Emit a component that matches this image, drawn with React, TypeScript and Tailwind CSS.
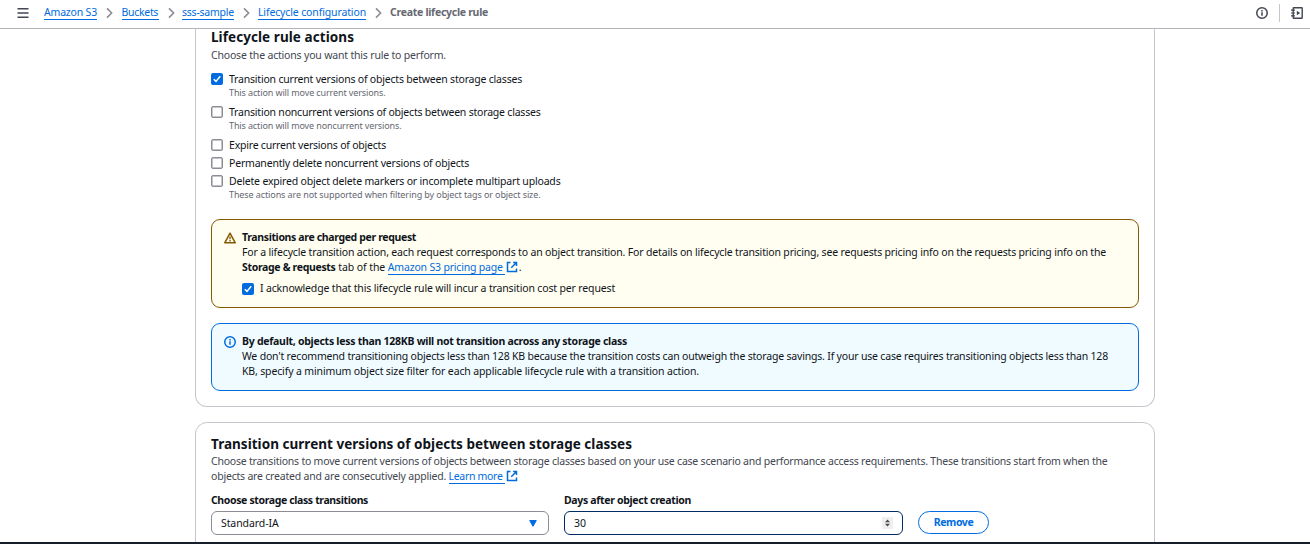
import type { ReactNode } from "react";

function Chevron() {
  return (
    <svg className="h-3 w-2 shrink-0" viewBox="0 0 8 12" fill="none" stroke="#8c8c94" strokeWidth="1.6">
      <path d="M1 1.4 5.6 6 1 10.6" />
    </svg>
  );
}

function InfoIcon({ className }: { className: string }) {
  return (
    <svg className={className} viewBox="0 0 16 16" fill="none" stroke="currentColor" strokeWidth="2">
      <circle cx="8" cy="8" r="7" />
      <path d="M8 11.5V7M8 6V4" />
    </svg>
  );
}

function WarningIcon() {
  return (
    <svg className="mt-0.5 h-3 w-3 shrink-0 text-[#855900]" viewBox="0 0 16 16" fill="none" stroke="currentColor" strokeWidth="2" strokeLinejoin="round">
      <path d="M8 1.6 15 14.4H1Z" />
      <path d="M8 6v3.6M8 10.8v1.8" strokeWidth="1.8" />
    </svg>
  );
}

function ExternalIcon() {
  return (
    <svg className="mr-px ml-px inline-block h-3 w-3 align-[-2px]" viewBox="0 0 16 16" fill="none" stroke="#006ce0" strokeWidth="2">
      <path d="M6 2H2v12h12v-4" />
      <path d="M9.5 2H14v4.5M14 2 7 9" />
    </svg>
  );
}

function Checkbox({ checked = false }: { checked?: boolean }) {
  return checked ? (
    <span role="checkbox" aria-checked="true" className="mt-px flex size-3 shrink-0 items-center justify-center rounded-[2px] bg-[#006ce0]">
      <svg className="size-3" viewBox="0 0 12 12" fill="none" stroke="#fff" strokeWidth="1.5">
        <path d="M2.8 6.2 5 8.4 9.2 3.3" />
      </svg>
    </span>
  ) : (
    <span role="checkbox" aria-checked="false" className="mt-px size-3 shrink-0 rounded-[2px] border border-[#8c8c94] bg-white shadow-[inset_0_0_0_0.5px_#8c8c94]" />
  );
}

function Option({ checked, label, hint }: { checked?: boolean; label: ReactNode; hint?: ReactNode }) {
  return (
    <div className="flex gap-1.5">
      <Checkbox checked={checked} />
      <div className="flex flex-col">
        {label}
        {hint && <div className="text-[9px] leading-[12px] text-[#656871]">{hint}</div>}
      </div>
    </div>
  );
}

export default function App() {
  return (
    <div className="flex h-[544px] w-[1310px] flex-col overflow-hidden bg-white font-['Noto_Sans','Open_Sans',sans-serif] text-[10.5px] leading-[15px] whitespace-nowrap text-[#0f141a]">
      <header className="flex h-[29px] shrink-0 items-start border-b border-[#b4b4bb]">
        <svg className="mt-[7px] ml-[17px] h-3 w-3 shrink-0" viewBox="0 0 12 12" stroke="#424650" strokeWidth="1.5">
          <path d="M.5 1.75h11M.5 6h11M.5 10.25h11" />
        </svg>
        <nav className="ml-[15px] flex pt-[5px] text-[#006ce0]">
          <div className="flex w-[77.5px]">
            <a className="h-[15px] w-[53px] border-b border-[#006ce0] tracking-[-0.19px]">Amazon S3</a>
            <span className="ml-[9px] pt-0.5"><Chevron /></span>
          </div>
          <div className="flex w-[60.5px]">
            <a className="h-[15px] w-[37px] border-b border-[#006ce0] tracking-[-0.3px]">Buckets</a>
            <span className="ml-[9px] pt-0.5"><Chevron /></span>
          </div>
          <div className="flex w-[76px]">
            <a className="h-[15px] w-[52px] border-b border-[#006ce0] tracking-[-0.23px]">sss-sample</a>
            <span className="ml-[9px] pt-0.5"><Chevron /></span>
          </div>
          <div className="flex w-[132px]">
            <a className="h-[15px] w-[108px] border-b border-[#006ce0] tracking-[-0.133px]">Lifecycle configuration</a>
            <span className="ml-[9px] pt-0.5"><Chevron /></span>
          </div>
          <span className="font-bold tracking-[-0.277px] text-[#656871]">Create lifecycle rule</span>
        </nav>
        <div className="ml-auto flex">
          <InfoIcon className="mt-[7px] size-3 text-[#424650]" />
          <span className="mt-1 ml-[11px] h-[18px] w-px bg-[#c6c6cd]" />
          <svg className="mt-[7px] mr-[7px] ml-[11px] size-3" viewBox="0 0 12 12" fill="none" stroke="#424650" strokeWidth="1.4">
            <rect x="2.2" y=".8" width="9" height="10.4" rx=".5" />
            <path d="M0 3.2h4M0 6h4M0 8.8h4" strokeWidth="1.2" />
            <path d="M5.8 3.8 9.2 6 5.8 8.2Z" fill="#424650" stroke="none" />
          </svg>
        </div>
      </header>

      <main className="ml-[195px] flex h-[513px] w-[960px] shrink-0 flex-col overflow-hidden">
        <section className="h-[378px] shrink-0 rounded-b-xl border border-t-0 border-[#c6c6cd] px-[15px]">
          <h2 className="h-[19px] text-[13.5px] leading-[17px] font-bold tracking-[0.071px]">Lifecycle rule actions</h2>
          <p className="tracking-[-0.184px] text-[#424650]">Choose the actions you want this rule to perform.</p>
          <div className="mt-[9px] flex flex-col gap-1.5">
            <Option
              checked
              label={<span className="tracking-[-0.204px]">Transition current versions of objects between storage classes</span>}
              hint={<span className="tracking-[-0.115px]">This action will move current versions.</span>}
            />
            <Option
              label={<span className="tracking-[-0.207px]">Transition noncurrent versions of objects between storage classes</span>}
              hint={<span className="tracking-[-0.12px]">This action will move noncurrent versions.</span>}
            />
            <div className="flex flex-col gap-[3px]">
              <Option label={<span className="tracking-[-0.211px]">Expire current versions of objects</span>} />
              <Option label={<span className="tracking-[-0.193px]">Permanently delete noncurrent versions of objects</span>} />
              <Option
                label={<span className="tracking-[-0.183px]">Delete expired object delete markers or incomplete multipart uploads</span>}
                hint={<span className="tracking-[-0.1px]">These actions are not supported when filtering by object tags or object size.</span>}
              />
            </div>
          </div>

          <div className="mt-[18px] flex h-[89px] gap-1.5 rounded-[9px] border border-[#855900] bg-[#fffef0] px-3 pt-[10px]">
            <WarningIcon />
            <div>
              <div className="font-bold tracking-[-0.355px]">Transitions are charged per request</div>
              <div className="tracking-[-0.166px]">
                For a lifecycle transition action, each request corresponds to an object transition. For details on lifecycle transition pricing, see requests pricing info on the requests pricing info on the
              </div>
              <div className="h-[15px]">
                <b className="tracking-[-0.333px]">Storage &amp; requests</b>
                <span className="tracking-[-0.076px]"> tab of the </span>
                <a className="border-b border-[#006ce0] pr-[2px] tracking-[-0.185px] text-[#006ce0]">Amazon S3 pricing page</a>
                <ExternalIcon />.
              </div>
              <div className="mt-[7px]">
                <Option checked label={<span className="-mt-px tracking-[-0.152px]">I acknowledge that this lifecycle rule will incur a transition cost per request</span>} />
              </div>
            </div>
          </div>

          <div className="mt-[15px] flex h-[68px] gap-1.5 rounded-[9px] border border-[#006ce0] bg-[#f0fbff] px-3 pt-[10px]">
            <InfoIcon className="mt-0.5 size-3 shrink-0 text-[#006ce0]" />
            <div>
              <div className="font-bold tracking-[-0.27px]">By default, objects less than 128KB will not transition across any storage class</div>
              <div className="tracking-[-0.187px]">
                We don't recommend transitioning objects less than 128 KB because the transition costs can outweigh the storage savings. If your use case requires transitioning objects less than 128
              </div>
              <div className="tracking-[-0.136px]">
                KB, specify a minimum object size filter for each applicable lifecycle rule with a transition action.
              </div>
            </div>
          </div>
        </section>

        <section className="mt-[15px] h-[180px] shrink-0 rounded-t-xl border border-[#c6c6cd] px-[15px] pt-[13px]">
          <h2 className="h-[18px] text-[13.5px] leading-[17px] font-bold tracking-[0.028px]">Transition current versions of objects between storage classes</h2>
          <div className="text-[#424650]">
            <div className="tracking-[-0.223px]">
              Choose transitions to move current versions of objects between storage classes based on your use case scenario and performance access requirements. These transitions start from when the
            </div>
            <div className="h-[15px]">
              <span className="tracking-[-0.203px]">objects are created and are consecutively applied. </span>
              <a className="border-b border-[#006ce0] pr-[2px] tracking-[-0.309px] text-[#006ce0]">Learn more</a>
              <ExternalIcon />
            </div>
          </div>
          <div className="mt-[9px] flex">
            <div className="w-[338px]">
              <div className="font-bold tracking-[-0.368px]">Choose storage class transitions</div>
              <div className="mt-[3px] flex h-6 items-center justify-between rounded-md border border-[#8c8c94] pr-[11px] pl-[9px]">
                <span className="tracking-[-0.092px]">Standard-IA</span>
                <svg className="h-[7px] w-2" viewBox="0 0 8 7">
                  <path d="M.7.5h6.6L4 6.3Z" fill="#006ce0" stroke="#006ce0" strokeLinejoin="round" />
                </svg>
              </div>
            </div>
            <div className="ml-[15px] w-[339px]">
              <div className="font-bold tracking-[-0.324px]">Days after object creation</div>
              <div className="mt-[3px] flex h-6 items-center justify-between rounded-md border border-[#002b66] pr-[9px] pl-[9px]">
                <span>30</span>
                <span className="flex h-3 w-[11px] items-center justify-center bg-[#efefef]">
                  <svg className="h-2 w-[5px]" viewBox="0 0 5 8" fill="#4a4a4a">
                    <path d="M0 3.3 2.5.4 5 3.3ZM0 4.7h5L2.5 7.6Z" />
                  </svg>
                </span>
              </div>
            </div>
            <button className="mt-[18px] ml-[15px] h-[23px] w-[71px] rounded-full border border-[#006ce0] font-bold tracking-[-0.4px] text-[#006ce0]">Remove</button>
          </div>
        </section>
      </main>
      <div className="h-0.5 shrink-0 bg-[#161d2b]" />
    </div>
  );
}
